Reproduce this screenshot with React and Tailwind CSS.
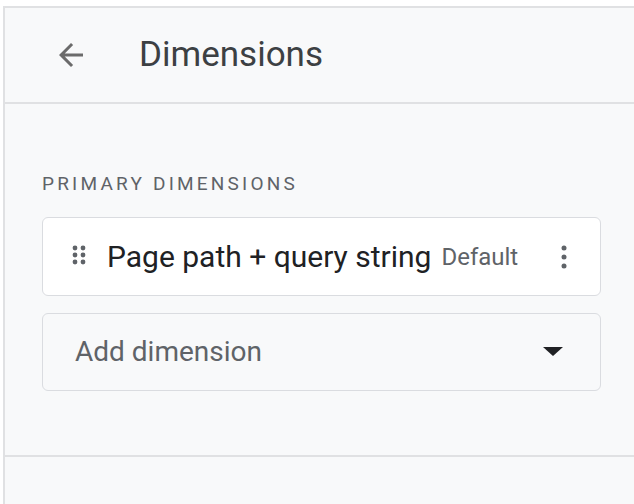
export default function App() {
  return (
    <div className="w-[634px] h-[504px] bg-white pt-[6px] pl-[3px] overflow-hidden" style={{ fontFamily: "Roboto, 'Liberation Sans', sans-serif" }}>
      <div className="h-full bg-[#f8f9fa] border-l-2 border-t-2 border-[#e0e1e3]">
        <div className="h-[96px] flex items-center border-b-2 border-[#e0e1e3]">
          <svg className="ml-[48px]" width="36" height="36" viewBox="0 0 24 24"><path d="M20 11H7.83l5.59-5.59L12 4l-8 8 8 8 1.41-1.41L7.83 13H20v-2z" fill="#6b6b6b"/></svg>
          <span className="ml-[50px] text-[35px] text-[#3c4043]">Dimensions</span>
        </div>
        <div className="pl-[37px] pr-[33px]">
          <div className="mt-[68px] text-[19px] tracking-[3.2px] text-[#5f6368] leading-[24px]">PRIMARY DIMENSIONS</div>
          <div className="mt-[21px] h-[79px] bg-white border border-[#dadce0] rounded-[6px] flex items-center">
            <svg className="ml-[28px]" width="16" height="26" viewBox="0 0 16 26">
              {[4, 12].map(x => [4, 11, 18].map(y => <circle key={x + '-' + y} cx={x} cy={y} r="2.4" fill="#5f6368" />))}
            </svg>
            <span className="ml-[20px] text-[30px] text-[#202124] whitespace-nowrap">Page path + query string</span>
            <span className="ml-[10px] text-[24px] text-[#5f6368] whitespace-nowrap">Default</span>
            <svg className="ml-auto mr-[33px]" width="6" height="26" viewBox="0 0 6 26">
              {[4, 13, 22].map(y => <circle key={y} cx="3" cy={y} r="2.5" fill="#5f6368" />)}
            </svg>
          </div>
          <div className="mt-[17px] h-[78px] border border-[#dadce0] rounded-[6px] flex items-center">
            <span className="ml-[32px] text-[28px] text-[#5f6368]">Add dimension</span>
            <svg className="ml-auto mr-[36px]" width="22" height="12" viewBox="0 0 22 12"><path d="M1 1h20L11 10z" fill="#202124"/></svg>
          </div>
        </div>
        <div className="mt-[64px] border-b-2 border-[#e0e1e3]"></div>
      </div>
    </div>
  );
}
